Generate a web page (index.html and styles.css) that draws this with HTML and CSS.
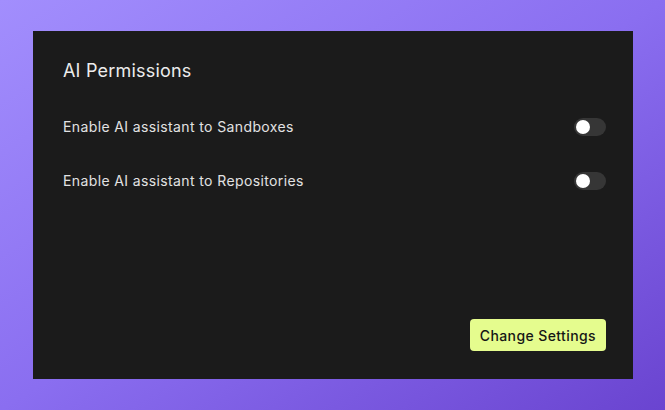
FILE: index.html
```html
<!DOCTYPE html>
<html lang="en">
<head>
<meta charset="utf-8">
<title>AI Permissions</title>
<link rel="stylesheet" href="styles.css">
</head>
<body>
<div class="stage">
  <section class="panel">
    <h2 class="title">AI Permissions</h2>
    <div class="rows">
      <div class="row">
        <span class="label">Enable AI assistant to Sandboxes</span>
        <span class="toggle"><span class="knob"></span></span>
      </div>
      <div class="row">
        <span class="label">Enable AI assistant to Repositories</span>
        <span class="toggle"><span class="knob"></span></span>
      </div>
    </div>
    <div class="actions">
      <button class="btn">Change Settings</button>
    </div>
  </section>
</div>
</body>
</html>
```
FILE: styles.css
```css
* { box-sizing: border-box; }
html, body { margin: 0; padding: 0; }
body {
  width: 665px;
  height: 410px;
  font-family: Inter, "Noto Sans", sans-serif;
  background: linear-gradient(to bottom right, #a28efd 0%, #8a6ef0 50%, #6a44d0 100%);
  overflow: hidden;
}
.stage {
  padding: 31px 32px 31px 33px;
}
.panel {
  width: 600px;
  height: 348px;
  background: #1b1b1b;
  padding: 28px 27px 28px 30px;
  display: flex;
  flex-direction: column;
}
.title {
  margin: 0;
  font-size: 18px;
  line-height: 24px;
  font-weight: 400;
  letter-spacing: 0.2px;
  color: #ececec;
}
.rows {
  margin-top: 35px;
  display: flex;
  flex-direction: column;
  gap: 36px;
}
.row {
  display: flex;
  justify-content: space-between;
  align-items: center;
  height: 18px;
}
.label {
  font-size: 14px;
  line-height: 18px;
  letter-spacing: 0.38px;
  color: #e2e2e2;
}
.toggle {
  width: 32px;
  height: 18px;
  border-radius: 9px;
  background: #363636;
  padding: 2px;
  display: flex;
}
.knob {
  width: 14px;
  height: 14px;
  border-radius: 50%;
  background: #ffffff;
}
.actions {
  margin-top: auto;
  display: flex;
  justify-content: flex-end;
}
.btn {
  font-family: Inter, "Noto Sans", sans-serif;
  font-size: 14px;
  font-weight: 500;
  letter-spacing: 0.4px;
  height: 32px;
  padding: 0 10px;
  border: none;
  border-radius: 4px;
  background: #e5fc8e;
  color: #161616;
  cursor: pointer;
}
```
